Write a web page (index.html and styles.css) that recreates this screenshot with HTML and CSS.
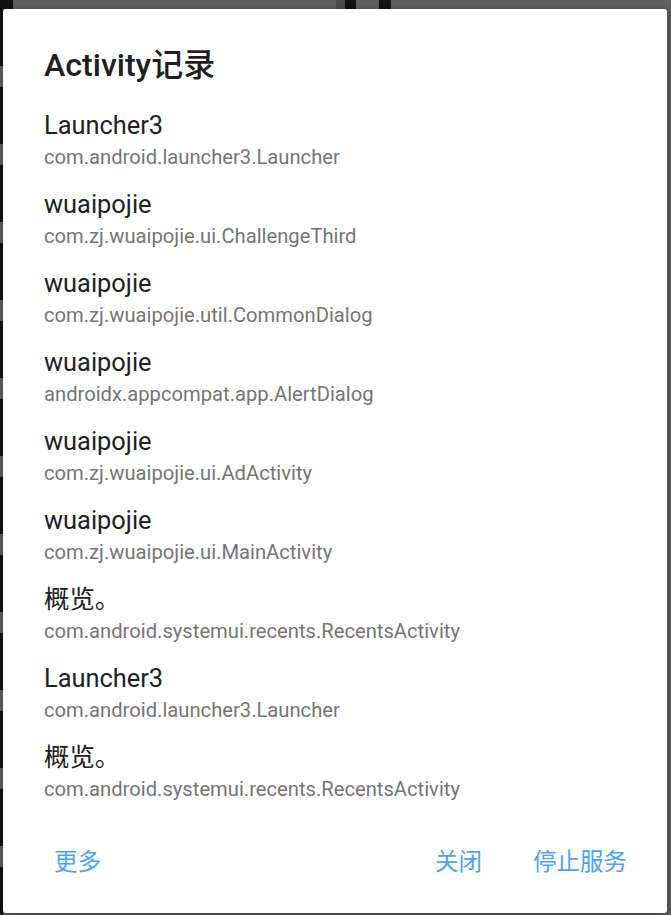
FILE: index.html
```html
<!DOCTYPE html>
<html lang="zh-CN">
<head>
<meta charset="utf-8">
<title>Activity记录</title>
<link rel="stylesheet" href="styles.css">
</head>
<body>
<div class="backdrop">
  <div class="topstrip">
    <div class="seg dark w13"></div>
    <div class="seg grey w323"><span class="bgname">Name</span></div>
    <div class="seg mid w9"></div>
    <div class="seg dark w11"></div>
    <div class="seg grey w23"></div>
    <div class="seg dark w12"></div>
    <div class="seg grey grow"><span class="bgname">Name</span></div>
  </div>
  <div class="leftstrip"></div>
</div>

<div class="dialog">
  <h1 class="title">Activity记录</h1>
  <ul class="list">
    <li class="item"><div class="primary">Launcher3</div><div class="secondary">com.android.launcher3.Launcher</div></li>
    <li class="item"><div class="primary">wuaipojie</div><div class="secondary">com.zj.wuaipojie.ui.ChallengeThird</div></li>
    <li class="item"><div class="primary">wuaipojie</div><div class="secondary">com.zj.wuaipojie.util.CommonDialog</div></li>
    <li class="item"><div class="primary">wuaipojie</div><div class="secondary">androidx.appcompat.app.AlertDialog</div></li>
    <li class="item"><div class="primary">wuaipojie</div><div class="secondary">com.zj.wuaipojie.ui.AdActivity</div></li>
    <li class="item"><div class="primary">wuaipojie</div><div class="secondary">com.zj.wuaipojie.ui.MainActivity</div></li>
    <li class="item"><div class="primary">概览。</div><div class="secondary">com.android.systemui.recents.RecentsActivity</div></li>
    <li class="item"><div class="primary">Launcher3</div><div class="secondary">com.android.launcher3.Launcher</div></li>
    <li class="item"><div class="primary">概览。</div><div class="secondary">com.android.systemui.recents.RecentsActivity</div></li>
  </ul>
  <div class="actions">
    <button class="btn btn-more">更多</button>
    <div class="spacer"></div>
    <button class="btn btn-close">关闭</button>
    <button class="btn btn-stop">停止服务</button>
  </div>
</div>
</body>
</html>
```
FILE: styles.css
```css
* { box-sizing: border-box; }
html, body {
  margin: 0;
  padding: 0;
  width: 671px;
  height: 915px;
  overflow: hidden;
}
body {
  background: #5e5e5e;
  font-family: Roboto, "Noto Sans CJK SC", sans-serif;
  position: relative;
}
.backdrop {
  display: flex;
  flex-direction: column;
  height: 915px;
}
.topstrip {
  display: flex;
  height: 9px;
  overflow: hidden;
}
.seg { height: 9px; position: relative; overflow: hidden; }
.dark { background: #121212; }
.grey { background: #5f5f5f; }
.mid { background: #4a4a4a; }
.w13 { width: 13px; }
.w323 { width: 323px; }
.w9 { width: 9px; }
.w11 { width: 11px; }
.w23 { width: 23px; }
.w12 { width: 12px; }
.grow { flex: 1; }
.bgname {
  display: block;
  color: #cfcfcf;
  font-size: 26px;
  line-height: 26px;
  margin-top: -23px;
  padding-left: 5px;
  white-space: nowrap;
}
.leftstrip {
  width: 3px;
  flex: 1;
  background: repeating-linear-gradient(to bottom, #121212 0px, #121212 57px, #5f5f5f 57px, #5f5f5f 78px);
}

.dialog {
  position: absolute;
  left: 3px;
  top: 9px;
  width: 664px;
  height: 904px;
  background: #ffffff;
  border-radius: 3px;
  box-shadow: 0 2px 6px rgba(0,0,0,0.35);
  display: flex;
  flex-direction: column;
}
.title {
  margin: 36px 0 0 0;
  padding-left: 41px;
  height: 40px;
  font-family: "Roboto Medium", Roboto, "Noto Sans CJK SC", sans-serif;
  font-size: 32px;
  line-height: 40px;
  font-weight: 500;
  color: #1f1f1f;
}
.list {
  list-style: none;
  margin: 24px 0 0 0;
  padding: 0 0 0 41px;
}
.item {
  height: 79px;
}
.primary {
  font-size: 25.4px;
  line-height: 33px;
  color: #212121;
}
.secondary {
  font-size: 20.2px;
  line-height: 30px;
  color: #757575;
}
.actions {
  display: flex;
  align-items: center;
  height: 48px;
  margin-top: 18px;
  padding: 0 40px 0 51px;
}
.spacer { flex: 1; }
.btn {
  background: none;
  border: 0;
  padding: 0;
  font-family: Roboto, "Noto Sans CJK SC", sans-serif;
  font-size: 23.5px;
  line-height: 48px;
  color: #4aa3f5;
}
.btn-close { margin-right: 51px; }
```
